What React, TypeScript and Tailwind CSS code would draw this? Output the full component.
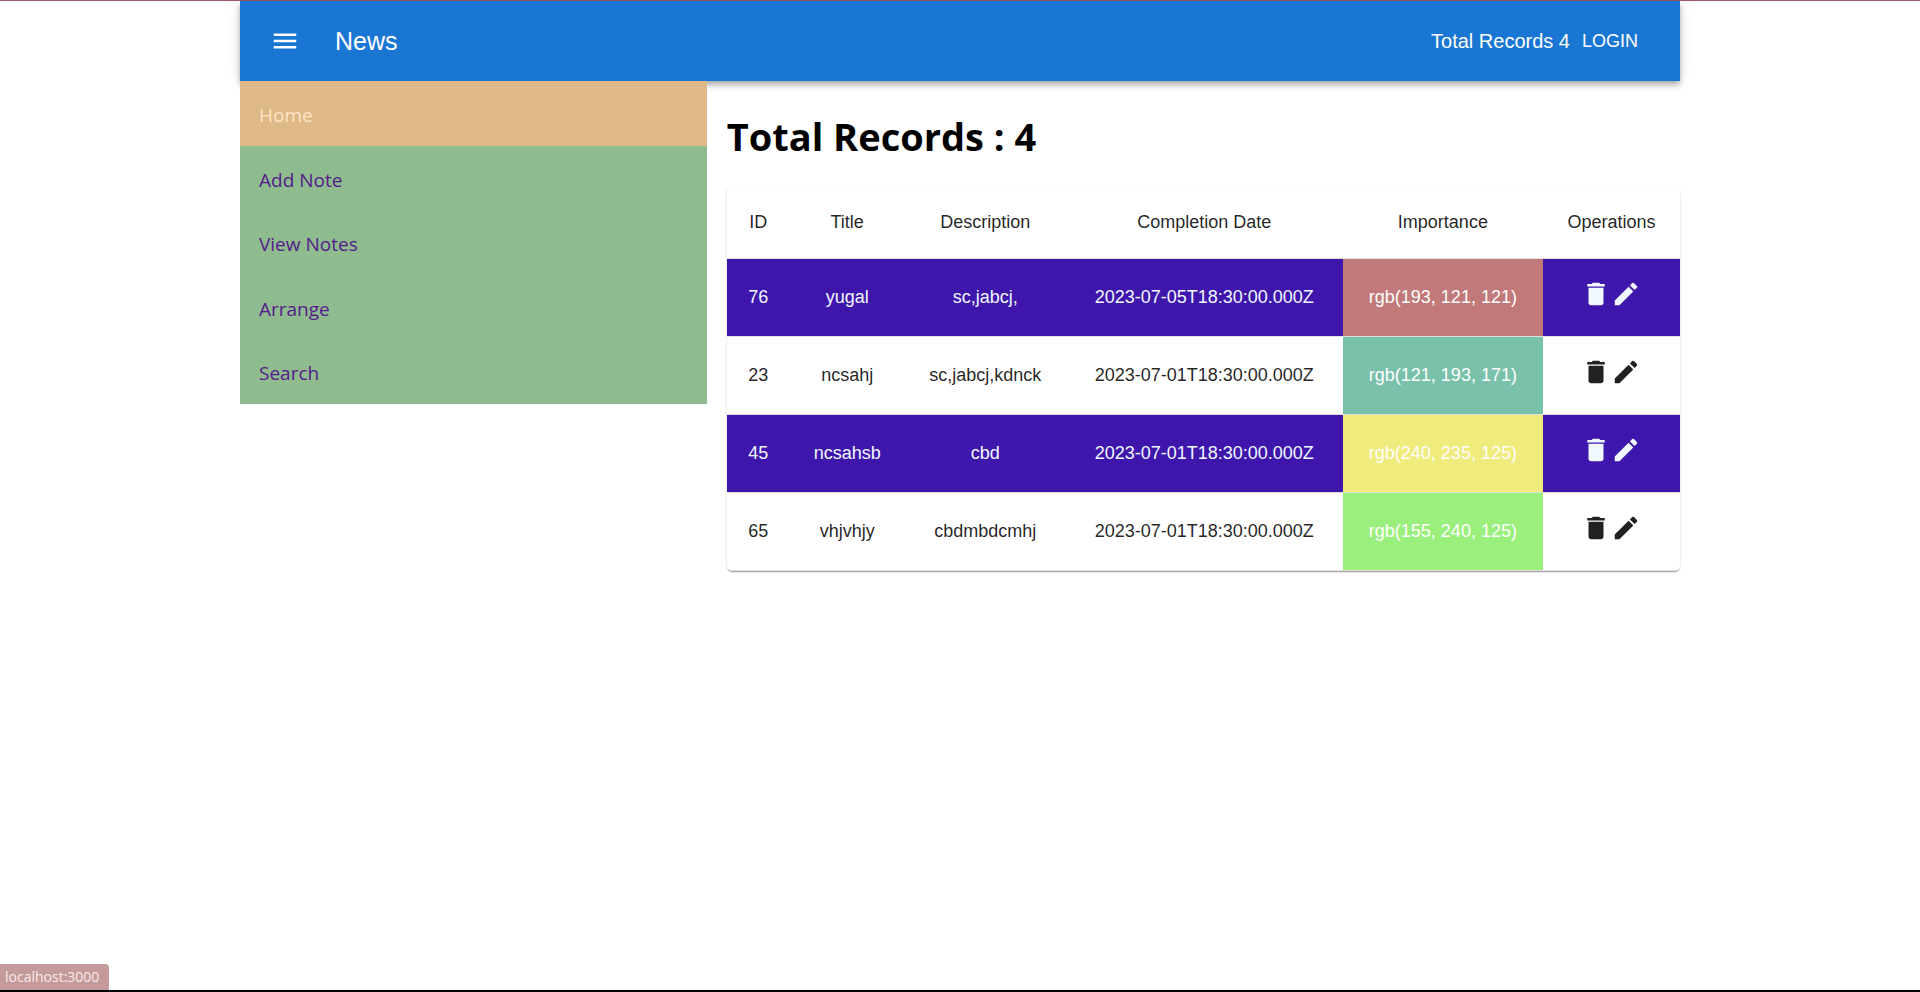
import { MdDelete, MdEdit, MdMenu } from "react-icons/md";

const links = ["Home", "Add Note", "View Notes", "Arrange", "Search"];

const notes = [
  { id: 76, title: "yugal", description: "sc,jabcj,", date: "2023-07-05T18:30:00.000Z", color: "rgb(193, 121, 121)" },
  { id: 23, title: "ncsahj", description: "sc,jabcj,kdnck", date: "2023-07-01T18:30:00.000Z", color: "rgb(121, 193, 171)" },
  { id: 45, title: "ncsahsb", description: "cbd", date: "2023-07-01T18:30:00.000Z", color: "rgb(240, 235, 125)" },
  { id: 65, title: "vhjvhjy", description: "cbdmbdcmhj", date: "2023-07-01T18:30:00.000Z", color: "rgb(155, 240, 125)" },
];

const columns = [
  { label: "ID", width: "w-[63px]" },
  { label: "Title", width: "w-[115px]" },
  { label: "Description", width: "w-[161px]" },
  { label: "Completion Date", width: "w-[277px]" },
  { label: "Importance", width: "w-[200px]" },
  { label: "Operations", width: "w-[137px]" },
];

function Header() {
  return (
    <header className="flex h-20 items-center bg-[#1976d2] px-[30px] text-white shadow-[0_3px_5px_-1px_rgba(0,0,0,0.2),0_5px_6px_0_rgba(0,0,0,0.14),0_1px_12px_0_rgba(0,0,0,0.12)]">
      <button type="button" aria-label="menu" className="mr-[35px]">
        <MdMenu size={30} />
      </button>
      <div className="grow text-[25px] font-medium leading-10">News</div>
      <span className="text-xl">Total Records {notes.length}</span>
      <button type="button" className="px-3 text-lg font-medium">LOGIN</button>
    </header>
  );
}

function Sidebar() {
  return (
    <nav className="font-['Open_Sans','Noto_Sans',sans-serif] text-[19px]">
      <ul className="grid h-[323px] grid-rows-5">
        {links.map((link, i) => (
          <li key={link} className={i === 0 ? "bg-[#deb887]" : "bg-[#8fbc8f]"}>
            <a
              href="#"
              className={`flex h-full items-center px-[19px] pt-1 ${i === 0 ? "text-[#ffe4c4]" : "text-[#551a8b]"}`}
            >
              {link}
            </a>
          </li>
        ))}
      </ul>
    </nav>
  );
}

function NotesTable() {
  return (
    <div className="overflow-hidden rounded-[5px] bg-white shadow-[0_2px_1px_-1px_rgba(0,0,0,0.2),0_1px_1px_0_rgba(0,0,0,0.14),0_1px_3px_0_rgba(0,0,0,0.12)]">
      <table className="w-full table-fixed border-collapse text-center text-lg text-black/87">
        <thead>
          <tr className="h-[71px] border-b border-[#e0e0e0]">
            {columns.map((c) => (
              <th key={c.label} scope="col" className={`${c.width} font-normal`}>
                {c.label}
              </th>
            ))}
          </tr>
        </thead>
        <tbody>
          {notes.map((n, i) => (
            <tr
              key={n.id}
              className={`h-[78px] border-b border-[#e0e0e0] ${i % 2 === 0 ? "bg-[#3f16ab] text-[#f0f8ff]" : ""}`}
            >
              <td>{n.id}</td>
              <td>{n.title}</td>
              <td>{n.description}</td>
              <td>{n.date}</td>
              <td className="text-white" style={{ backgroundColor: n.color }}>{n.color}</td>
              <td>
                <div className="flex justify-center pb-1.5">
                  <button type="button" aria-label={`Delete note ${n.id}`}>
                    <MdDelete size={30} />
                  </button>
                  <button type="button" aria-label={`Edit note ${n.id}`}>
                    <MdEdit size={30} />
                  </button>
                </div>
              </td>
            </tr>
          ))}
        </tbody>
      </table>
    </div>
  );
}

export default function App() {
  return (
    <div className="flex min-h-screen flex-col border-t border-t-[#a05864] border-b-2 border-b-black bg-white font-['Liberation_Sans',Arial,sans-serif]">
      <div className="mx-auto w-full max-w-[1440px] grow">
        <Header />
        <div className="relative grid grid-cols-3 gap-5">
          <Sidebar />
          <main className="col-span-2">
            <h1 className="pt-[30px] pb-[26px] font-['Open_Sans','Noto_Sans',sans-serif] text-[38px] font-bold leading-[50px] text-black">
              Total Records : {notes.length}
            </h1>
            <NotesTable />
          </main>
        </div>
      </div>
      <div className="self-start rounded-tr-[4px] bg-[#c49a9a] pl-[5px] pr-[10px] font-['Open_Sans','Noto_Sans',sans-serif] text-sm leading-[26px] text-[#fbeaea]">
        localhost:3000
      </div>
    </div>
  );
}
